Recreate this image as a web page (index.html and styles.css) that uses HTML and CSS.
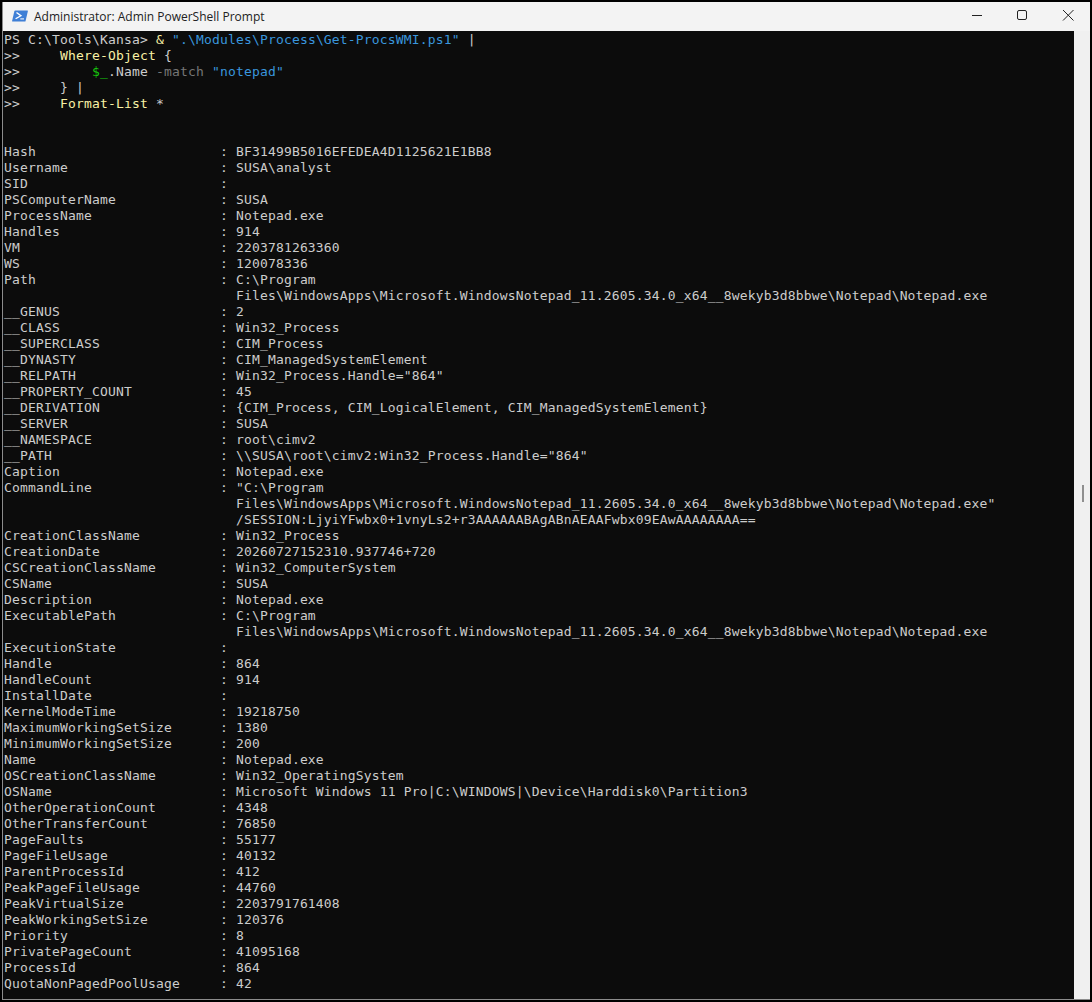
FILE: index.html
```html
<!DOCTYPE html>
<html lang="en">
<head>
<meta charset="utf-8">
<title>Administrator: Admin PowerShell Prompt</title>
<link rel="stylesheet" href="styles.css">
</head>
<body>
<div class="window">
  <header class="titlebar">
    <svg class="app-icon" width="16" height="12" viewBox="0 0 16 14" preserveAspectRatio="none">
      <path d="M3.2 0.5H15.4Q16 0.5 15.9 1.2L13.6 12.8Q13.4 13.5 12.8 13.5H0.6Q0 13.5 0.1 12.8L2.4 1.2Q2.6 0.5 3.2 0.5Z" fill="#3f7fd6"/>
      <path d="M4.5 3L9 6.6L3.6 10.2" fill="none" stroke="#fff" stroke-width="1.4"/>
      <path d="M8.3 10.4H12" stroke="#fff" stroke-width="1.2"/>
    </svg>
    <span class="title">Administrator: Admin PowerShell Prompt</span>
    <div class="controls">
      <svg class="ctl" width="46" height="29" viewBox="0 0 46 29"><path d="M18 13.5H28" stroke="#222" fill="none"/></svg>
      <svg class="ctl" width="46" height="29" viewBox="0 0 46 29"><rect x="17.5" y="8.5" width="9" height="9" rx="1.5" stroke="#222" fill="none"/></svg>
      <svg class="ctl" width="44" height="29" viewBox="0 0 44 29"><path d="M17 8L27.5 18.5M27.5 8L17 18.5" stroke="#222" fill="none"/></svg>
    </div>
  </header>
  <div class="body">
    <pre class="console">PS C:\Tools\Kansa&gt; <span class="y">&amp;</span> <span class="s">".\Modules\Process\Get-ProcsWMI.ps1"</span> |
&gt;&gt;     <span class="y">Where-Object</span> {
&gt;&gt;         <span class="g">$_</span>.Name <span class="p">-match</span> <span class="s">"notepad"</span>
&gt;&gt;     } |
&gt;&gt;     <span class="y">Format-List</span> *


Hash                       : BF31499B5016EFEDEA4D1125621E1BB8
Username                   : SUSA\analyst
SID                        :
PSComputerName             : SUSA
ProcessName                : Notepad.exe
Handles                    : 914
VM                         : 2203781263360
WS                         : 120078336
Path                       : C:\Program
                             Files\WindowsApps\Microsoft.WindowsNotepad_11.2605.34.0_x64__8wekyb3d8bbwe\Notepad\Notepad.exe
__GENUS                    : 2
__CLASS                    : Win32_Process
__SUPERCLASS               : CIM_Process
__DYNASTY                  : CIM_ManagedSystemElement
__RELPATH                  : Win32_Process.Handle="864"
__PROPERTY_COUNT           : 45
__DERIVATION               : {CIM_Process, CIM_LogicalElement, CIM_ManagedSystemElement}
__SERVER                   : SUSA
__NAMESPACE                : root\cimv2
__PATH                     : \\SUSA\root\cimv2:Win32_Process.Handle="864"
Caption                    : Notepad.exe
CommandLine                : "C:\Program
                             Files\WindowsApps\Microsoft.WindowsNotepad_11.2605.34.0_x64__8wekyb3d8bbwe\Notepad\Notepad.exe"
                             /SESSION:LjyiYFwbx0+1vnyLs2+r3AAAAAABAgABnAEAAFwbx09EAwAAAAAAAA==
CreationClassName          : Win32_Process
CreationDate               : 20260727152310.937746+720
CSCreationClassName        : Win32_ComputerSystem
CSName                     : SUSA
Description                : Notepad.exe
ExecutablePath             : C:\Program
                             Files\WindowsApps\Microsoft.WindowsNotepad_11.2605.34.0_x64__8wekyb3d8bbwe\Notepad\Notepad.exe
ExecutionState             :
Handle                     : 864
HandleCount                : 914
InstallDate                :
KernelModeTime             : 19218750
MaximumWorkingSetSize      : 1380
MinimumWorkingSetSize      : 200
Name                       : Notepad.exe
OSCreationClassName        : Win32_OperatingSystem
OSName                     : Microsoft Windows 11 Pro|C:\WINDOWS|\Device\Harddisk0\Partition3
OtherOperationCount        : 4348
OtherTransferCount         : 76850
PageFaults                 : 55177
PageFileUsage              : 40132
ParentProcessId            : 412
PeakPageFileUsage          : 44760
PeakVirtualSize            : 2203791761408
PeakWorkingSetSize         : 120376
Priority                   : 8
PrivatePageCount           : 41095168
ProcessId                  : 864
QuotaNonPagedPoolUsage     : 42</pre>
    <div class="scrollbar"><div class="thumb"></div></div>
  </div>
</div>
</body>
</html>
```
FILE: styles.css
```css
html, body {
  margin: 0;
  padding: 0;
  background: #000;
  overflow: hidden;
}
.window {
  box-sizing: border-box;
  width: 1088px;
  height: 998px;
  margin: 2px 0 0 2px;
  display: flex;
  flex-direction: column;
  background: #f3f3f3;
  border-left: 1px solid #8c8c8c;
  border-bottom: 1px solid #8c8c8c;
}
.titlebar {
  box-sizing: border-box;
  height: 29px;
  flex: none;
  display: flex;
  align-items: center;
  padding: 0 0 2px 9px;
  background: #f3f3f3;
}
.app-icon {
  flex: none;
  margin-right: 6px;
}
.title {
  margin-top: 1px;
  font: 12px "Open Sans", "Noto Sans", sans-serif;
  color: #222;
}
.controls {
  margin-left: auto;
  align-self: flex-start;
  display: flex;
}
.ctl {
  display: block;
}
.body {
  flex: 1;
  min-height: 0;
  display: flex;
}
.console {
  flex: 1;
  min-width: 0;
  margin: 0;
  padding: 1px 0 0 1px;
  background: #0c0c0c;
  color: #cccccc;
  font: 13px/16px "DejaVu Sans Mono", monospace;
  letter-spacing: 0.17px;
  overflow: hidden;
}
.y { color: #f9f1a5; }
.s { color: #3a96dd; }
.g { color: #16c60c; }
.p { color: #767676; }
.scrollbar {
  flex: none;
  width: 16px;
  background: #f0f0f0;
  position: relative;
}
.thumb {
  position: absolute;
  top: 454px;
  left: 8px;
  width: 2px;
  height: 17px;
  background: #8f8f8f;
}
```
